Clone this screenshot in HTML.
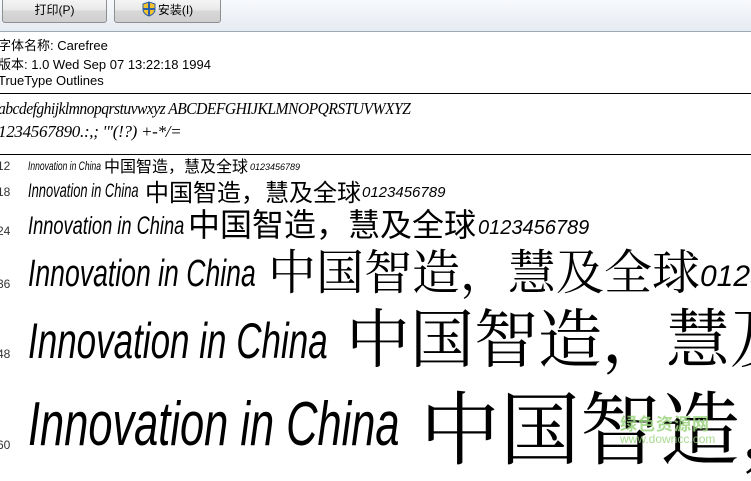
<!DOCTYPE html>
<html><head><meta charset="utf-8"><style>
body{margin:0;width:751px;height:463px;overflow:hidden;background:#fff;position:relative;font-family:"Liberation Sans","Noto Sans CJK SC",sans-serif;color:#000}
.tb{position:absolute;left:0;top:0;width:751px;height:31px;background:linear-gradient(#f7f9fc,#e6ebf2);border-bottom:1px solid #a0a8b4}
.btn{position:absolute;top:-2px;height:23px;border:1px solid #8e8f8f;border-radius:3px;background:linear-gradient(#f6f6f6 0%,#e8e8e8 50%,#d8d8d8 51%,#cfcfcf 100%);font-size:12px;line-height:23px;text-align:center}
.info{position:absolute;left:-2px;font-size:13px}
.hr{position:absolute;left:0;width:751px;height:1px;background:#000}
.n{position:absolute;left:-3px;font-size:12px;color:#333}
.c{position:absolute;white-space:nowrap}
.l{position:absolute;white-space:nowrap;font-style:italic;line-height:1;transform-origin:0 0}
.s{font-family:'Liberation Serif','Noto Serif CJK SC',serif}
</style></head><body>
<div class="tb">
<div class="btn" style="left:2px;width:103px">打印(P)</div>
<div class="btn" style="left:114px;width:105px"><svg width="14" height="16" viewBox="0 0 14 16" style="vertical-align:-3px;margin-right:2px"><path d="M7 1L1 3v5c0 4 3 6 6 7 3-1 6-3 6-7V3z" fill="#f2c230" stroke="#2c5fa8"/><path d="M7 1v14M1 8h12" stroke="#2c5fa8" stroke-width="2"/></svg>安装(I)</div>
</div>
<div class="info" style="top:35px">字体名称: Carefree</div>
<div class="info" style="top:54px">版本: 1.0 Wed Sep 07 13:22:18 1994</div>
<div class="info" style="top:73px">TrueType Outlines</div>
<div class="hr" style="top:93px"></div>
<div class="c" style="left:-2px;top:99px;font-family:'Liberation Serif',serif;font-style:italic;font-size:17px;letter-spacing:-0.6px;transform:scaleX(0.92);transform-origin:0 0">abcdefghijklmnopqrstuvwxyz ABCDEFGHIJKLMNOPQRSTUVWXYZ</div>
<div class="c" style="left:-2px;top:122px;font-family:'Liberation Serif',serif;font-style:italic;font-size:17px;letter-spacing:-0.3px">1234567890.:,; '"(!?) +-*/=</div>
<div class="hr" style="top:154px"></div>

<div class="n" style="top:159px">12</div>
<div class="l" style="left:28px;top:160px;font-size:12px;transform:scaleX(.71)">Innovation in China</div>
<div class="c" style="left:104px;top:153px;font-size:16px">中国智造，慧及全球</div>
<div class="l" style="left:250px;top:163px;font-size:9px">0123456789</div>

<div class="n" style="top:185px">18</div>
<div class="l" style="left:28px;top:182px;font-size:19px;transform:scaleX(.68)">Innovation in China</div>
<div class="c" style="left:145px;top:173px;font-size:24px">中国智造，慧及全球</div>
<div class="l" style="left:362px;top:185px;font-size:15px">0123456789</div>

<div class="n" style="top:224px">24</div>
<div class="l" style="left:28px;top:214px;font-size:25px;transform:scaleX(.73)">Innovation in China</div>
<div class="c" style="left:188px;top:200px;font-size:32px">中国智造，慧及全球</div>
<div class="l" style="left:478px;top:218px;font-size:20px">0123456789</div>

<div class="n" style="top:277px">36</div>
<div class="l" style="left:28px;top:255px;font-size:38px;transform:scaleX(.70)">Innovation in China</div>
<div class="c s" style="left:268px;top:234px;font-size:48px">中国智造，慧及全球</div>
<div class="l" style="left:700px;top:262px;font-size:30px">0123456789</div>

<div class="n" style="top:347px">48</div>
<div class="l" style="left:28px;top:316px;font-size:50px;transform:scaleX(.70)">Innovation in China</div>
<div class="c s" style="left:346px;top:289px;font-size:64px">中国智造，慧及全球</div>

<div class="n" style="top:438px">60</div>
<div class="l" style="left:28px;top:394px;font-size:62px;transform:scaleX(.70)">Innovation in China</div>
<div class="c s" style="left:420px;top:366px;font-size:80px">中国智造，慧及全球</div>

<div class="c" style="left:620px;top:410px;font-size:17px;color:#9bd47f;font-weight:bold;letter-spacing:1px;opacity:.85">绿色资源网</div>
<div class="c" style="left:620px;top:432px;font-size:12px;color:#9bd47f;opacity:.85">www.downcc.com</div>
</body></html>
